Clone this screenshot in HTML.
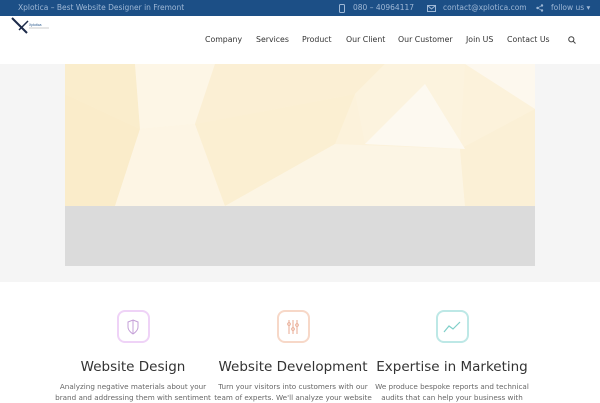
<!DOCTYPE html>
<html><head><meta charset="utf-8"><style>
*{margin:0;padding:0;box-sizing:border-box}
body{width:600px;height:400px;overflow:hidden;background:#fff;font-family:"DejaVu Sans","Liberation Sans",sans-serif;position:relative}
.top{position:absolute;left:0;top:0;width:600px;height:16px;background:#1c4f86;color:#9fb8d6;font-size:7.5px;line-height:16px}
.top span{position:absolute;top:0}
.nav{position:absolute;top:35px;font-size:7.8px;color:#333}
.nav span{position:absolute;white-space:nowrap}
.grey{position:absolute;left:0;top:64px;width:600px;height:218px;background:#f5f5f5}
.hero{position:absolute;left:65px;top:64px;width:470px;height:142px;background:#fcf2db;overflow:hidden}
.gbox{position:absolute;left:65px;top:206px;width:470px;height:60px;background:#dbdbdb}
.col{position:absolute;top:310px;width:160px;text-align:center}
.ic{width:33px;height:33px;border:2.5px solid;border-radius:8px;margin:0 auto;display:flex;align-items:center;justify-content:center}
.col h3{font-weight:normal;font-size:13.5px;color:#333;margin-top:16px;white-space:nowrap}
.col p{font-size:7.2px;color:#666;line-height:11px;margin-top:6px}
</style></head><body>
<div class="top">
<span style="left:18px">Xplotica – Best Website Designer in Fremont</span>
<svg style="position:absolute;left:339px;top:4px" width="6" height="9"><rect x="0.5" y="0.5" width="5" height="8" rx="1" fill="none" stroke="#9fb8d6"/></svg>
<span style="left:353px">080 – 40964117</span>
<svg style="position:absolute;left:427px;top:5px" width="9" height="7"><rect x="0.5" y="0.5" width="8" height="6" fill="none" stroke="#9fb8d6"/><path d="M0.5 0.5L4.5 4L8.5 0.5" fill="none" stroke="#9fb8d6"/></svg>
<span style="left:443px">contact@xplotica.com</span>
<svg style="position:absolute;left:536px;top:4px" width="8" height="8"><circle cx="6" cy="1.5" r="1.2" fill="#9fb8d6"/><circle cx="1.5" cy="4" r="1.2" fill="#9fb8d6"/><circle cx="6" cy="6.5" r="1.2" fill="#9fb8d6"/><path d="M6 1.5L1.5 4L6 6.5" stroke="#9fb8d6" fill="none" stroke-width="0.7"/></svg>
<span style="left:551px">follow us ▾</span>
</div>
<svg style="position:absolute;left:11px;top:17px" width="40" height="18" viewBox="0 0 40 18">
<path d="M1 1 L16 16" stroke="#1c2a4a" stroke-width="2"/><path d="M8 13 L17 4" stroke="#1c2a4a" stroke-width="1.5"/>
<text x="18" y="9" font-size="3.5" fill="#1c4f86" font-family="Liberation Sans">Xplotica</text>
<line x1="18" y1="11" x2="38" y2="11" stroke="#999" stroke-width="0.6"/>
</svg>
<div class="nav">
<span style="left:205px">Company</span>
<span style="left:256px">Services</span>
<span style="left:302px">Product</span>
<span style="left:346px">Our Client</span>
<span style="left:398px">Our Customer</span>
<span style="left:466px">Join US</span>
<span style="left:507px">Contact Us</span>
</div>
<svg style="position:absolute;left:568px;top:36px" width="8" height="8"><circle cx="3.3" cy="3.3" r="2.6" fill="none" stroke="#444"/><path d="M5.2 5.2L7.5 7.5" stroke="#444"/></svg>
<div class="grey"></div>
<div class="hero">
<svg width="470" height="142" viewBox="0 0 470 142">
<polygon points="0,0 70,0 75,65 0,30" fill="#faedcc"/>
<polygon points="70,0 150,0 130,60 75,65" fill="#fdf6e6"/>
<polygon points="150,0 320,0 290,30 130,60" fill="#fbefd4"/>
<polygon points="320,0 400,0 470,45 470,0" fill="#fdf8ee"/>
<polygon points="290,30 320,0 400,0 395,85 300,80" fill="#fcf3de"/>
<polygon points="0,30 75,65 50,142 0,142" fill="#faecca"/>
<polygon points="75,65 130,60 160,142 50,142" fill="#fdf5e4"/>
<polygon points="130,60 290,30 270,80 160,142" fill="#fbefd2"/>
<polygon points="270,80 395,85 400,142 160,142" fill="#fcf5e4"/>
<polygon points="395,85 470,45 470,142 400,142" fill="#fbf0d6"/>
<polygon points="300,80 360,20 400,85" fill="#fdf9f0"/>
</svg>
</div>
<div class="gbox"></div>
<div class="col" style="left:53px"><div class="ic" style="border-color:#efd3f7"><svg width="14" height="16" viewBox="0 0 14 16"><path d="M7 1 L12 3 V8 C12 12 7 15 7 15 C7 15 2 12 2 8 V3 Z M7 1 V15" fill="none" stroke="#c5a0d8" stroke-width="1"/></svg></div><h3>Website Design</h3><p>Analyzing negative materials about your brand and addressing them with sentiment</p></div>
<div class="col" style="left:213px"><div class="ic" style="border-color:#f7d8c8"><svg width="14" height="16" viewBox="0 0 14 16"><path d="M3 1V15M7 1V15M11 1V15" stroke="#e8a890" stroke-width="1"/><circle cx="3" cy="5" r="1.3" fill="#fff" stroke="#e8a890"/><circle cx="7" cy="10" r="1.3" fill="#fff" stroke="#e8a890"/><circle cx="11" cy="6" r="1.3" fill="#fff" stroke="#e8a890"/></svg></div><h3>Website Development</h3><p>Turn your visitors into customers with our team of experts. We'll analyze your website</p></div>
<div class="col" style="left:372px"><div class="ic" style="border-color:#bde8e6"><svg width="18" height="14" viewBox="0 0 18 14"><path d="M1 12 L6 6 L10 9 L17 2" fill="none" stroke="#7fcfc9" stroke-width="1.2"/></svg></div><h3>Expertise in Marketing</h3><p>We produce bespoke reports and technical audits that can help your business with</p></div>
</body></html>
